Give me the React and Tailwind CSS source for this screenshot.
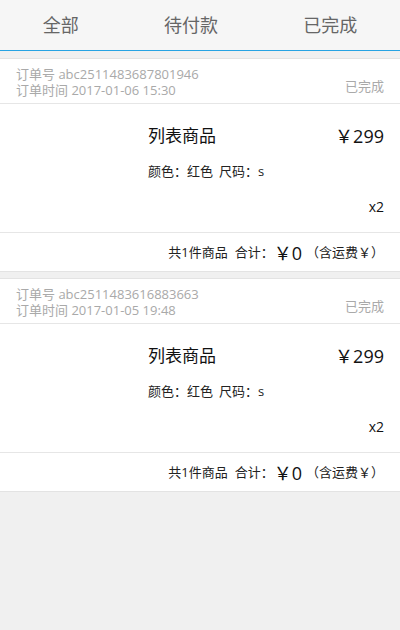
import React from "react";

const orders = [
  { id: "abc2511483687801946", time: "2017-01-06 15:30" },
  { id: "abc2511483616883663", time: "2017-01-05 19:48" },
];

const tabs = ["全部", "待付款", "已完成"];

const OrderCard = ({ order }) => (
  <div className="bg-white border-y border-[#e3e3e3]">
    <div className="flex justify-between px-4 pt-[7px] pb-[5px] border-b border-[#e6e6e6] text-[13px] leading-4 text-[#a9a9a9]">
      <div>
        <div>订单号 {order.id}</div>
        <div>订单时间 {order.time}</div>
      </div>
      <div className="self-end mb-[4px]">已完成</div>
    </div>

    <div className="pl-[148px] pr-4 pt-[20px] pb-[16px] border-b border-[#e6e6e6] text-[#111]">
      <div className="flex justify-between items-center h-6">
        <span className="text-[17px]">列表商品</span>
        <span className="text-[18px]">￥299</span>
      </div>
      <div className="mt-[14px] h-5 flex items-center text-[13px] text-[#222]">
        颜色：红色<span className="ml-[6px]">尺码：s</span>
      </div>
      <div className="mt-[14px] h-5 flex items-center justify-end text-[14px]">x2</div>
    </div>

    <div className="flex justify-end items-center h-[38px] px-4 pt-[2px] text-[13px] text-[#222]">
      <span>共1件商品</span>
      <span className="ml-[7px]">合计：</span>
      <span className="text-[18px] mr-[4px] text-[#111]">￥0</span>
      <span>（含运费￥）</span>
    </div>
  </div>
);

export default function App() {
  return (
    <div
      className="min-h-[630px] bg-[#f0f0f0]"
      style={{ fontFamily: '"Open Sans", "Noto Sans CJK SC", sans-serif' }}
    >
      <div className="h-[51px] bg-[#f6f6f6] border-b border-[#27a3e3] flex justify-around items-center text-[18px] text-[#666]">
        {tabs.map((t) => (
          <span key={t}>{t}</span>
        ))}
      </div>
      <div className="mt-[7px] flex flex-col gap-[6px]">
        {orders.map((o) => (
          <OrderCard key={o.id} order={o} />
        ))}
      </div>
    </div>
  );
}
